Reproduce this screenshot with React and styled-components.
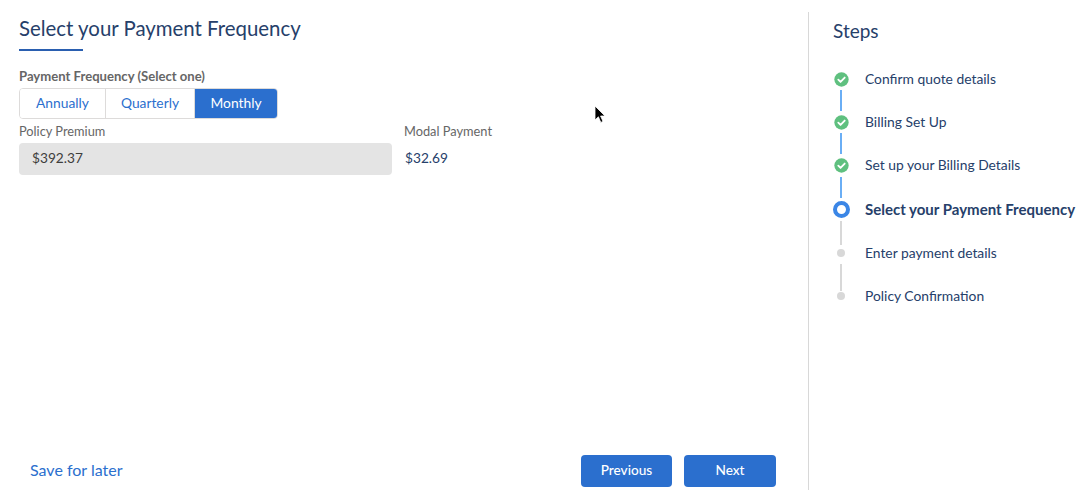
import styled, { createGlobalStyle } from 'styled-components';

const GlobalStyle = createGlobalStyle`
  html, body {
    margin: 0;
    padding: 0;
    background: #fff;
  }
  * { box-sizing: border-box; }
`;

const Page = styled.div`
  position: relative;
  display: flex;
  width: 1083px;
  height: 498px;
  padding-top: 12px;
  overflow: hidden;
  font-family: Lato, "Liberation Sans", sans-serif;
  color: #16325c;
`;

const Main = styled.main`
  display: flex;
  flex: none;
  flex-direction: column;
  width: 809px;
  height: 478px;
  padding: 0 32px 3px 19px;
  border-right: 1px solid #d8d8d8;
`;

const Title = styled.h1`
  margin: 2px 0 0;
  font-size: 20.4px;
  line-height: 28px;
  font-weight: 400;
  color: #26406a;
`;

const TitleRule = styled.div`
  width: 64px;
  height: 2px;
  margin-top: 7px;
  background: #2a5fb0;
`;

const GroupLabel = styled.div`
  margin-top: 17px;
  font-size: 13.1px;
  line-height: 17px;
  font-weight: 700;
  color: #666;
`;

const Segments = styled.div`
  display: flex;
  width: 259px;
  height: 31px;
  margin-top: 3px;
  border: 1px solid #dddbda;
  border-radius: 4px;
  overflow: hidden;
`;

const Segment = styled.button`
  width: ${({ $width }) => $width}px;
  padding: 0 0 3px;
  border: none;
  border-left: ${({ $first }) => ($first ? 'none' : '1px solid #dddbda')};
  background: ${({ $active }) => ($active ? '#2b6fce' : '#fff')};
  color: ${({ $active }) => ($active ? '#fff' : '#2b6fce')};
  font: 400 13.8px Lato, "Liberation Sans", sans-serif;
`;

const Fields = styled.div`
  display: flex;
  gap: 12px;
  margin-top: 4px;
`;

const Field = styled.div`
  width: ${({ $width }) => $width}px;
`;

const FieldLabel = styled.div`
  font-size: 12.8px;
  line-height: 17px;
  color: #666;
`;

const ReadOnlyInput = styled.div`
  height: 32px;
  margin-top: 3px;
  padding-left: 13px;
  border-radius: 4px;
  background: #e4e4e4;
  font-size: 13.7px;
  line-height: 30px;
  color: #3e3e3c;
`;

const FieldValue = styled.div`
  margin-top: 3px;
  padding-left: 1px;
  font-size: 13.7px;
  line-height: 30px;
  color: #26406a;
`;

const Footer = styled.footer`
  display: flex;
  align-items: center;
  justify-content: space-between;
  margin-top: auto;
  padding-left: 11px;
`;

const SaveLink = styled.a`
  padding-bottom: 3px;
  font-size: 16px;
  color: #2b6fce;
`;

const Actions = styled.div`
  display: flex;
  gap: 12px;
`;

const ActionButton = styled.button`
  width: ${({ $width }) => $width}px;
  height: 32px;
  padding: 0 0 2px;
  border: none;
  border-radius: 4px;
  background: #2b6fce;
  color: #fff;
  font: 500 13.6px Lato, "Liberation Sans", sans-serif;
`;

const Sidebar = styled.aside`
  flex: 1;
  padding: 6px 0 0 24px;
`;

const StepsTitle = styled.h2`
  margin: 0;
  font-size: 19px;
  line-height: 26px;
  font-weight: 400;
  color: #26406a;
`;

const StepList = styled.ol`
  margin: 13px 0 0;
  padding: 0;
  list-style: none;
`;

const StepItem = styled.li`
  display: flex;
  align-items: center;
  gap: 16px;
  height: ${({ $height }) => $height}px;
`;

const Marker = styled.div`
  position: relative;
  display: flex;
  align-items: center;
  justify-content: center;
  width: 16px;
  height: 16px;
  flex: none;
  margin-top: 1px;
`;

const Connector = styled.span`
  position: absolute;
  top: 19px;
  left: 7px;
  width: 2px;
  height: ${({ $height }) => $height}px;
  background: ${({ $done }) => ($done ? '#6aaef5' : '#d8d8d8')};
`;

const Ring = styled.span`
  width: 17px;
  height: 17px;
  flex: none;
  border: 4px solid #3b86e6;
  border-radius: 50%;
  background: #fff;
`;

const Dot = styled.span`
  width: 8px;
  height: 8px;
  border-radius: 50%;
  background: #d8d8d8;
`;

const StepText = styled.span`
  font-size: ${({ $current }) => ($current ? 15 : 13.85)}px;
  line-height: 20px;
  white-space: nowrap;
  font-weight: ${({ $current }) => ($current ? 700 : 400)};
  color: #26406a;
`;

const Cursor = styled.svg`
  position: absolute;
  left: 593px;
  top: 105px;
`;

const CheckMark = () => (
  <svg width="15" height="15" viewBox="0 0 14 14">
    <circle cx="7" cy="7" r="6.7" fill="#5fc07f" />
    <path d="M4 7.2l2.1 2.1L10 5.2" fill="none" stroke="#fff" strokeWidth="1.7" strokeLinecap="round" strokeLinejoin="round" />
  </svg>
);

const steps = [
  { label: 'Confirm quote details', state: 'done', height: 43, line: 21 },
  { label: 'Billing Set Up', state: 'done', height: 43, line: 21 },
  { label: 'Set up your Billing Details', state: 'done', height: 44, line: 21 },
  { label: 'Select your Payment Frequency', state: 'current', height: 44, line: 24 },
  { label: 'Enter payment details', state: 'todo', height: 43, line: 27 },
  { label: 'Policy Confirmation', state: 'todo', height: 43 },
];

export default function App() {
  return (
    <>
      <GlobalStyle />
      <Page>
        <Main>
          <Title>Select your Payment Frequency</Title>
          <TitleRule />
          <GroupLabel>Payment Frequency (Select one)</GroupLabel>
          <Segments>
            <Segment $first $width={85}>Annually</Segment>
            <Segment $width={89}>Quarterly</Segment>
            <Segment $active $width={83}>Monthly</Segment>
          </Segments>
          <Fields>
            <Field $width={373}>
              <FieldLabel>Policy Premium</FieldLabel>
              <ReadOnlyInput>$392.37</ReadOnlyInput>
            </Field>
            <Field $width={200}>
              <FieldLabel>Modal Payment</FieldLabel>
              <FieldValue>$32.69</FieldValue>
            </Field>
          </Fields>
          <Footer>
            <SaveLink>Save for later</SaveLink>
            <Actions>
              <ActionButton $width={91}>Previous</ActionButton>
              <ActionButton $width={92}>Next</ActionButton>
            </Actions>
          </Footer>
        </Main>
        <Sidebar>
          <StepsTitle>Steps</StepsTitle>
          <StepList>
            {steps.map((step) => (
              <StepItem key={step.label} $height={step.height}>
                <Marker>
                  {step.state === 'done' && <CheckMark />}
                  {step.state === 'current' && <Ring />}
                  {step.state === 'todo' && <Dot />}
                  {step.line && <Connector $done={step.state === 'done'} $height={step.line} />}
                </Marker>
                <StepText $current={step.state === 'current'}>{step.label}</StepText>
              </StepItem>
            ))}
          </StepList>
        </Sidebar>
        <Cursor width="14" height="20" viewBox="0 0 14 20">
          <path d="M2 1v14l3.4-3.2 2.4 5.6 2.2-1-2.4-5.4H12z" fill="#000" stroke="#fff" strokeWidth="0.8" />
        </Cursor>
      </Page>
    </>
  );
}
